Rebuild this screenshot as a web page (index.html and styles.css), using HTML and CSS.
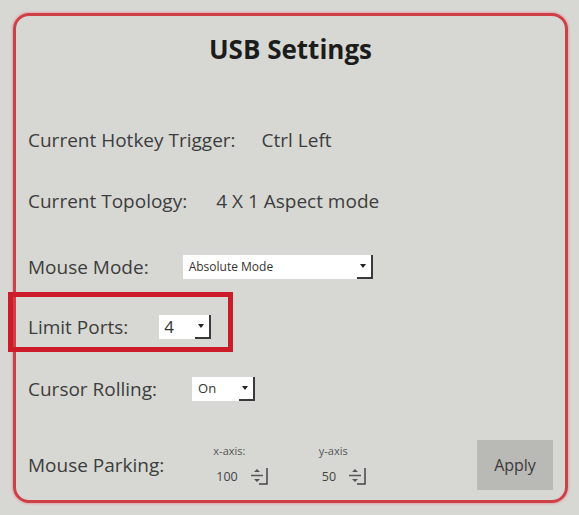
FILE: index.html
```html
<!DOCTYPE html>
<html>
<head>
	<meta charset="utf-8">
	<title>USB Settings</title>
	<link rel="stylesheet" href="styles.css">
</head>
<body>
	<div class="panel">
		<h1 class="title">USB Settings</h1>

		<!--热键-->
		<div class="row row-hotkey">
			<span class="label">Current Hotkey Trigger:</span>
			<span class="value">Ctrl Left</span>
		</div>
		<!--拓扑-->
		<div class="row row-topology">
			<span class="label">Current Topology:</span>
			<span class="value">4 X 1 Aspect mode</span>
		</div>
		<!--鼠标模式-->
		<div class="row row-mode">
			<span class="label">Mouse Mode:</span>
			<div class="combo combo-mode">
				<span class="combo-text">Absolute Mode</span>
				<span class="combo-arrow"></span>
			</div>
		</div>
		<!--端口-->
		<div class="row row-ports">
			<span class="label">Limit Ports:</span>
			<div class="combo combo-ports">
				<span class="combo-text">4</span>
				<span class="combo-arrow"></span>
			</div>
			<div class="mark"></div>
		</div>
		<!--光标-->
		<div class="row row-rolling">
			<span class="label">Cursor Rolling:</span>
			<div class="combo combo-rolling">
				<span class="combo-text">On</span>
				<span class="combo-arrow"></span>
			</div>
		</div>
		<!--停车位置-->
		<div class="row row-parking">
			<span class="label">Mouse Parking:</span>
			<div class="axis axis-x">
				<span class="axis-name">x-axis:</span>
				<div class="spin">
					<span class="spin-value">100</span>
					<svg class="spin-btn" width="22" height="20" viewBox="0 0 22 20">
						<path d="M7 6 L10 3 L13 6 Z M7 13 L10 16 L13 13 Z" fill="#555"/>
						<path d="M4 9.5 H16" stroke="#555" stroke-width="1.5"/>
						<path d="M20 2 V18 H12" stroke="#444" stroke-width="1.5" fill="none"/>
					</svg>
				</div>
			</div>
			<div class="axis axis-y">
				<span class="axis-name">y-axis</span>
				<div class="spin">
					<span class="spin-value">50</span>
					<svg class="spin-btn" width="22" height="20" viewBox="0 0 22 20">
						<path d="M7 6 L10 3 L13 6 Z M7 13 L10 16 L13 13 Z" fill="#555"/>
						<path d="M4 9.5 H16" stroke="#555" stroke-width="1.5"/>
						<path d="M20 2 V18 H12" stroke="#444" stroke-width="1.5" fill="none"/>
					</svg>
				</div>
			</div>
			<button class="apply">Apply</button>
		</div>
	</div>
</body>
</html>
```

FILE: styles.css
```css
* {
	margin: 0;
	padding: 0;
	box-sizing: border-box;
}

html,
body {
	height: 100%;
}

body {
	padding: 13px 11px 12px 13px;
	background-color: #d7d8d4;
	font-family: "Open Sans", "Noto Sans", sans-serif;
	color: #3d3d3d;
}

.panel {
	height: 100%;
	border: 3px solid #cf3f47;
	border-radius: 16px;
	box-shadow: 0 0 2px 1px rgba(235, 120, 130, 0.5);
	padding: 17px 12px 0 12px;
	display: flex;
	flex-direction: column;
}

.title {
	flex-shrink: 0;
	text-align: center;
	font-size: 26px;
	font-weight: bold;
	line-height: 32px;
	color: #1c1c1c;
	margin-bottom: 60px;
}

.row {
	flex-shrink: 0;
	position: relative;
	display: flex;
	align-items: center;
	height: 30px;
	font-size: 19px;
	margin-bottom: 31px;
}

.row-topology {
	margin-bottom: 36px;
}

.row-mode {
	margin-bottom: 30px;
}

.row-ports {
	margin-bottom: 32px;
}

.row-rolling {
	margin-bottom: 35px;
}

.row-hotkey .value {
	margin-left: 26px;
}

.row-topology .value {
	margin-left: 29px;
}

.combo {
	display: flex;
	align-items: center;
	height: 24px;
	background-color: #fff;
	border-right: 2px solid #3a3a3a;
	border-bottom: 2px solid transparent;
	position: relative;
}

.combo-text {
	flex: 1;
	padding-left: 6px;
	font-size: 12px;
	color: #333;
}

.combo-arrow {
	width: 14px;
	height: 100%;
	position: relative;
}

.combo-arrow:before {
	content: "";
	position: absolute;
	left: 3px;
	top: 9px;
	border-left: 3px solid transparent;
	border-right: 3px solid transparent;
	border-top: 4px solid #222;
}

.combo-arrow:after {
	content: "";
	position: absolute;
	left: 0;
	right: -2px;
	bottom: -2px;
	height: 2px;
	background-color: #3a3a3a;
}

.combo-mode {
	width: 190px;
	margin-left: 34px;
}

.combo-ports {
	width: 52px;
	margin-left: 31px;
}

.combo-ports .combo-text {
	font-size: 17px;
	padding-left: 5px;
}

.combo-rolling {
	width: 63px;
	margin-left: 35px;
}

.combo-rolling .combo-text {
	font-size: 13px;
}

/* 红色标注框 */
.mark {
	position: absolute;
	left: -20px;
	top: -20px;
	width: 225px;
	height: 60px;
	border: 5px solid #cc1c2a;
}

.row-parking {
	height: 52px;
	margin-bottom: 0;
}

.axis {
	display: flex;
	flex-direction: column;
	align-items: flex-start;
	font-size: 11px;
	color: #555;
}

.axis-name {
	line-height: 14px;
	margin-left: -3px;
	margin-bottom: 8px;
}

.spin {
	display: flex;
	align-items: center;
	gap: 9px;
	font-size: 12.5px;
	color: #444;
}

.axis-x {
	margin-left: 52px;
}

.axis-y {
	margin-left: 53px;
}

.apply {
	margin-left: auto;
	width: 76px;
	height: 50px;
	border: none;
	background-color: #b9b9b6;
	font-family: "Open Sans", "Noto Sans", sans-serif;
	font-size: 16px;
	color: #3a3a3a;
}
```
